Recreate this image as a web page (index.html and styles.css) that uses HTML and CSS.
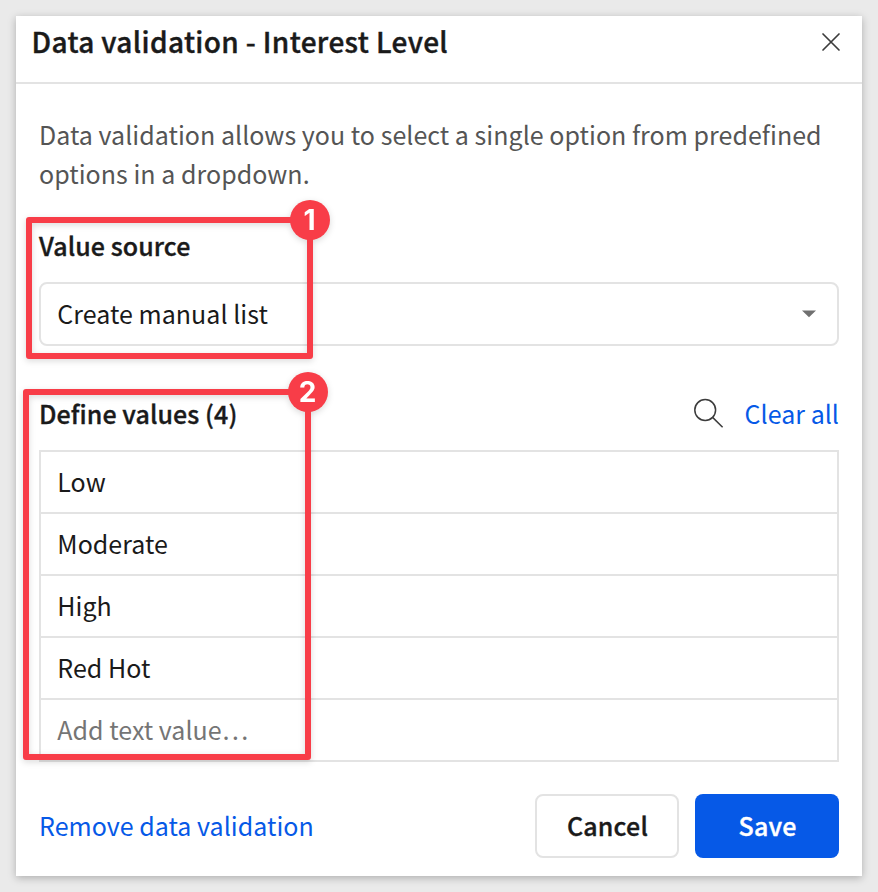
FILE: index.html
```html
<!DOCTYPE html>
<html lang="en">
<head>
<meta charset="utf-8">
<title>Data validation</title>
<link rel="stylesheet" href="styles.css">
</head>
<body>
<main class="dialog">
  <header class="header">
    <h1 class="title">Data validation - Interest Level</h1>
    <button class="close" aria-label="Close"><svg width="20" height="20" viewBox="0 0 20 20"><path d="M2 2 18 18M18 2 2 18"/></svg></button>
  </header>
  <div class="content">
    <p class="intro">Data validation allows you to select a single option from predefined options in a dropdown.</p>
    <section class="source">
      <h2 class="label">Value source</h2>
      <div class="select"><span class="select-text">Create manual list</span><svg class="caret" width="14" height="8" viewBox="0 0 14 8"><path d="M0 .5H14L7 7.2Z"/></svg></div>
      <div class="mark mark-one"><span class="badge">1</span></div>
    </section>
    <section class="values">
      <div class="values-head">
        <h2 class="label">Define values (4)</h2>
        <svg class="search" width="32" height="32" viewBox="0 0 32 32"><circle cx="13.2" cy="13" r="10.4"/><path d="M20.6 20.4 30.6 30.3"/></svg>
        <a class="link">Clear all</a>
      </div>
      <ul class="list">
        <li>Low</li>
        <li>Moderate</li>
        <li>High</li>
        <li>Red Hot</li>
        <li class="placeholder">Add text value…</li>
      </ul>
      <div class="mark mark-two"><span class="badge">2</span></div>
    </section>
    <footer class="footer">
      <a class="link remove">Remove data validation</a>
      <button class="button cancel">Cancel</button>
      <button class="button save">Save</button>
    </footer>
  </div>
</main>
</body>
</html>
```
FILE: styles.css
```css
* { box-sizing: border-box; }
body {
  margin: 0;
  padding: 16px;
  height: 892px;
  overflow: hidden;
  background: #eaeaea;
  color: #1a1a1a;
  font: 25px/38px "Noto Sans CJK SC", "Noto Sans", sans-serif;
  letter-spacing: .03px;
}
h1, h2, p, ul { margin: 0; padding: 0; }
button { font: inherit; padding: 0; }
.dialog {
  width: 846px;
  height: 860px;
  background: #fff;
  box-shadow: 0 2px 8px rgba(0, 0, 0, .26);
}
.header {
  display: flex;
  justify-content: space-between;
  height: 68px;
  padding: 5px 21px 0 15.5px;
  border-bottom: 2px solid #e3e3e3;
}
.title {
  font-size: 28px;
  line-height: 40px;
  font-weight: 500;
  letter-spacing: .36px;
  white-space: nowrap;
  -webkit-text-stroke: .4px;
}
.close { display: flex; align-items: center; height: 42px; border: 0; background: none; }
.close svg { fill: none; stroke: #3c3c3c; stroke-width: 1.7; stroke-linecap: round; }
.content { padding: 31px 23px 0; }
.intro { height: 102px; line-height: 39px; color: #555; }
.source, .values { position: relative; }
.source { height: 166px; padding-top: 9px; }
.label { font-size: 25px; line-height: 38px; font-weight: 500; letter-spacing: .08px; -webkit-text-stroke: .35px; }
.select {
  display: flex;
  align-items: center;
  justify-content: space-between;
  height: 64px;
  margin-top: 18px;
  padding: 0 21px 0 16.3px;
  border: 2px solid #e3e3e3;
  border-radius: 8px;
}
.select-text { padding-bottom: 2px; }
.caret { fill: #707070; }
.values-head { display: flex; align-items: center; height: 67px; padding-bottom: 8px; }
.values-head .label { flex: 1; }
.search { margin-right: 21px; fill: none; stroke: #3c3c3c; stroke-width: 1.5; }
.link { color: #0659e7; }
.list { list-style: none; border: 2px solid #e3e3e3; }
.list li { height: 62px; padding: 10px 16.3px 0; border-bottom: 2px solid #e3e3e3; }
.list li:last-child { height: 60px; border-bottom: 0; }
.list .placeholder { color: #757575; }
.footer { display: flex; align-items: center; gap: 16px; margin-top: 32px; }
.remove { flex: 1; padding-bottom: 2px; }
.button {
  width: 144px;
  height: 64px;
  padding: 0 0 2px 1px;
  border-radius: 8px;
  font-weight: 500;
  letter-spacing: .2px;
  -webkit-text-stroke: .35px;
}
.cancel { border: 2px solid #e3e3e3; background: #fff; color: #1a1a1a; }
.save { border: 0; background: #0659e7; color: #fff; }
.mark {
  position: absolute;
  border: 6px solid #f83d48;
  border-radius: 3px;
  filter: drop-shadow(0 2px 3px rgba(0, 0, 0, .15));
}
.mark-one { left: -13.5px; top: 0; width: 287.5px; height: 142px; }
.mark-two { left: -16.5px; top: 6px; width: 288.5px; height: 371px; }
.badge {
  position: absolute;
  right: -22.5px;
  top: -23px;
  width: 40px;
  height: 40px;
  border-radius: 50%;
  background: #f83d48;
  color: #fff;
  font: 700 28px/40px Inter, sans-serif;
  text-align: center;
}
```
